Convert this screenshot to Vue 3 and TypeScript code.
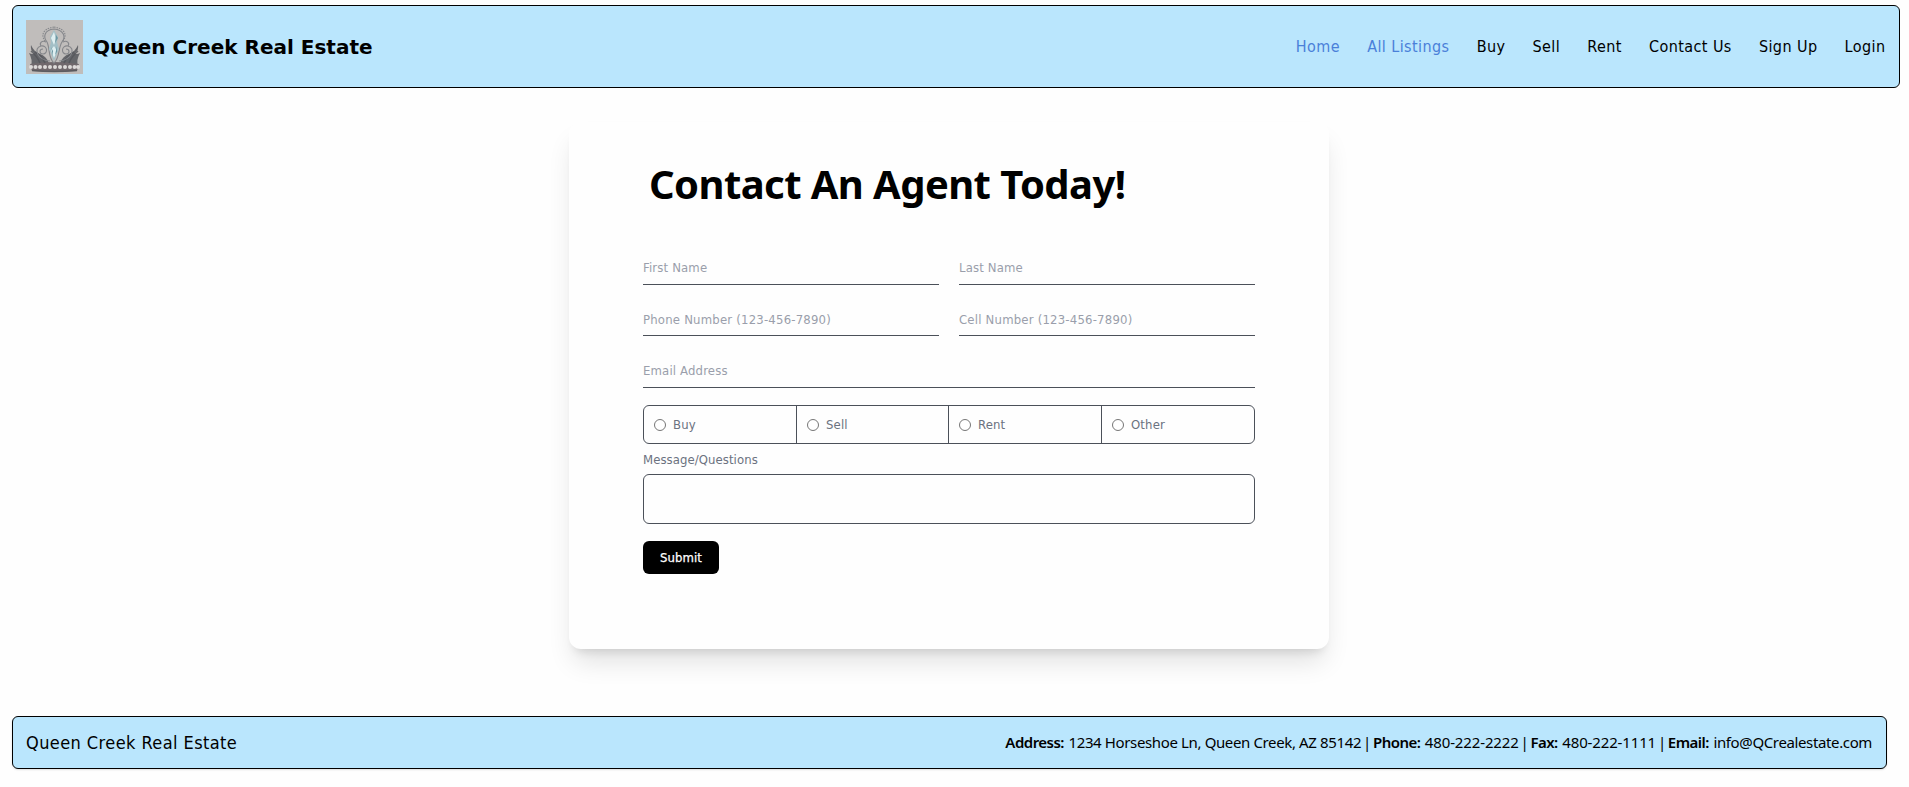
<script setup lang="ts">
interface NavLink { label: string; visited?: boolean }
interface Field { id: string; label: string; wide?: boolean }

const links: NavLink[] = [
  { label: 'Home', visited: true },
  { label: 'All Listings', visited: true },
  { label: 'Buy' },
  { label: 'Sell' },
  { label: 'Rent' },
  { label: 'Contact Us' },
  { label: 'Sign Up' },
  { label: 'Login' },
]
const fields: Field[] = [
  { id: 'first', label: 'First Name' },
  { id: 'last', label: 'Last Name' },
  { id: 'phone', label: 'Phone Number (123-456-7890)' },
  { id: 'cell', label: 'Cell Number (123-456-7890)' },
  { id: 'email', label: 'Email Address', wide: true },
]
const interests: string[] = ['Buy', 'Sell', 'Rent', 'Other']
const pearls: number[] = [5, 9.5, 14, 19, 24, 29, 34, 39, 44, 48.5, 52]
</script>

<template>
  <div class="page">
    <header class="header">
      <div class="brand">
        <svg class="logo" viewBox="0 0 57 54" aria-hidden="true">
          <rect width="57" height="54" fill="#c0bdbb" />
          <g fill="#65666a">
            <path d="M5 25 Q8 32 14 34 Q20 36 23 43 L5 46 Q7 40 3 33 Q7 35 8 33 Q4 30 5 25Z" />
            <path d="M52 25 Q49 32 43 34 Q37 36 34 43 L52 46 Q50 40 54 33 Q50 35 49 33 Q53 30 52 25Z" />
            <path d="M4 44 Q28 40 53 44 L51 51 Q28 53 6 51Z" fill="#70686c" />
          </g>
          <g fill="none" stroke="#54555a" stroke-width="1.6" opacity=".8">
            <path d="M5 31 Q11 36 14 43 M9 32 Q16 36 19 43 M52 31 Q46 36 43 43 M48 32 Q41 36 38 43 M6 50.5 Q28 52.5 51 50.5" />
          </g>
          <g fill="none" stroke="#85878b" stroke-width="1.1">
            <path d="M28 9 C18 10 17 17 21 22 C24 28 22 38 28 43 C34 38 32 28 36 22 C40 17 38 10 28 9Z" />
            <path d="M28 7 C15 9 15 17 20 22" stroke-dasharray="1.5 1" />
            <path d="M28 7 C41 9 41 17 36 22" stroke-dasharray="1.5 1" />
            <path d="M24 41 C11 40 7 28 15 26 C22 25 22 34 17 34 C13 34 13 29 17 29" />
            <path d="M33 41 C46 40 50 28 42 26 C35 25 35 34 40 34 C44 34 44 29 40 29" />
            <path d="M20 22 C16 20 13 23 15 26 M37 22 C41 20 44 23 42 26" />
          </g>
          <path d="M28 10 L32 17 L31 22 L33 29 L28 41 L23 29 L25 22 L24 17Z" fill="#a3bfc6" />
          <path d="M28 12 L30 19 L28 25 L25 18Z M28 26 L31 31 L28 38 L25 30Z" fill="#dfeff1" />
          <path d="M30 15 L32 18 L29 23Z M25 27 L27 31 L27 36Z M31 26 L31 32 L29 35Z" fill="#6d97a2" />
          <g fill="#dddad9">
            <circle v-for="x in pearls" :key="x" :cx="x" cy="47" r="2" />
          </g>
        </svg>
        <span class="brand-name">Queen Creek Real Estate</span>
      </div>
      <nav class="nav">
        <a v-for="l in links" :key="l.label" class="link" :class="{ visited: l.visited }">{{ l.label }}</a>
      </nav>
    </header>

    <main class="card">
      <h1 class="title">Contact An Agent Today!</h1>
      <form class="form" @submit.prevent>
        <div class="fields">
          <label v-for="f in fields" :key="f.id" class="field" :class="[f.id, { wide: f.wide }]">{{ f.label }}</label>
        </div>
        <div class="choices">
          <label v-for="i in interests" :key="i" class="choice">
            <span class="dot"></span><span>{{ i }}</span>
          </label>
        </div>
        <label class="message-label">Message/Questions</label>
        <div class="message"></div>
        <button class="submit" type="submit">Submit</button>
      </form>
    </main>

    <footer class="footer">
      <span class="footer-name">Queen Creek Real Estate</span>
      <div class="contact">
        <b>Address:</b><span>1234 Horseshoe Ln, Queen Creek, AZ 85142</span><i>|</i>
        <b>Phone:</b><span class="digits">480-222-2222</span><i>|</i>
        <b>Fax:</b><span class="digits">480-222-1111</span><i>|</i>
        <b>Email:</b><span>info@QCrealestate.com</span>
      </div>
    </footer>
  </div>
</template>

<style>
body { background: #fefefe; overflow: hidden; }
</style>

<style scoped>
.page {
  box-sizing: border-box;
  height: 787px;
  padding: 5px 9px 0 12px;
  font-family: "DejaVu Sans Condensed", "DejaVu Sans", sans-serif;
  font-stretch: condensed;
  color: #000;
}
.header, .footer {
  box-sizing: border-box;
  display: flex;
  align-items: center;
  justify-content: space-between;
  background: #bae6fd;
  border: 1px solid #000;
  border-radius: 6px;
}
.header { height: 83px; padding: 0 13.5px 0 13px; }
.brand { display: flex; align-items: center; gap: 10px; }
.logo { display: block; width: 57px; height: 54px; }
.brand-name {
  font: 700 20px/28px "DejaVu Sans", sans-serif;
  font-stretch: normal;
}
.nav { display: flex; gap: 27.1px; }
.link { font-size: 16px; line-height: 24px; letter-spacing: 0.42px; white-space: nowrap; }
.visited { color: #4a80d9; }

.card {
  box-sizing: border-box;
  width: 760px;
  height: 527px;
  margin: 34px 0 0 557px;
  padding: 34px 74px 0;
  border-radius: 12px;
  background: #fefefe;
  box-shadow: 0 17px 27px -5px rgba(0, 0, 0, 0.12), 0 8px 10px -6px rgba(0, 0, 0, 0.12);
}
.title {
  margin: 0 0 0 6px;
  font: 700 40px/56px "Noto Sans", "Open Sans", sans-serif;
  letter-spacing: -0.58px;
  white-space: nowrap;
}
.form { font-size: 13px; color: #6b7280; letter-spacing: 0.15px; }
.fields {
  display: grid;
  grid-template-columns: 1fr 1fr;
  grid-template-rows: 51px 51px 52px;
  column-gap: 20px;
  margin-top: 22px;
}
.field {
  display: flex;
  align-items: flex-end;
  padding-bottom: 8px;
  line-height: 16px;
  color: #9a9eab;
  border-bottom: 1px solid #4b5059;
}
.phone, .cell { padding-bottom: 7px; letter-spacing: 0.2px; }
.wide { grid-column: span 2; }
.choices {
  box-sizing: border-box;
  display: grid;
  grid-template-columns: 152px 152px 153px 1fr;
  height: 39px;
  margin-top: 17px;
  border: 1px solid #4b5059;
  border-radius: 6px;
}
.choice { display: flex; align-items: center; gap: 7px; padding-left: 10px; }
.choice + .choice { border-left: 1px solid #4b5059; }
.dot {
  box-sizing: border-box;
  width: 12px;
  height: 12px;
  border: 1px solid #767676;
  border-radius: 50%;
  background: #fff;
}
.message-label { display: block; margin-top: 7px; line-height: 18px; letter-spacing: 0.07px; }
.message {
  box-sizing: border-box;
  height: 50px;
  margin-top: 5px;
  border: 1px solid #4b5059;
  border-radius: 6px;
}
.submit {
  display: block;
  width: 76px;
  height: 33px;
  margin-top: 17px;
  padding: 0;
  border: 0;
  border-radius: 6px;
  background: #000;
  color: #fff;
  font: inherit;
  letter-spacing: 0.1px;
  -webkit-text-stroke: 0.25px #fff;
}
.footer {
  height: 53px;
  margin: 67px 13px 0 0;
  padding: 0 14px 0 13px;
  box-shadow: 0 1px 2px rgba(0, 0, 0, 0.12);
}
.footer-name { font-size: 18px; line-height: 26px; letter-spacing: 0.42px; }
.contact {
  display: flex;
  padding-bottom: 2px;
  font: 400 15px/22px "Noto Sans", "Open Sans", sans-serif;
  letter-spacing: -0.37px;
  white-space: nowrap;
}
.contact b { font-weight: 600; margin-right: 4.5px; letter-spacing: -0.52px; }
.contact i { width: 11.8px; text-align: center; font-style: normal; }
.contact .digits { letter-spacing: -0.14px; }
</style>
